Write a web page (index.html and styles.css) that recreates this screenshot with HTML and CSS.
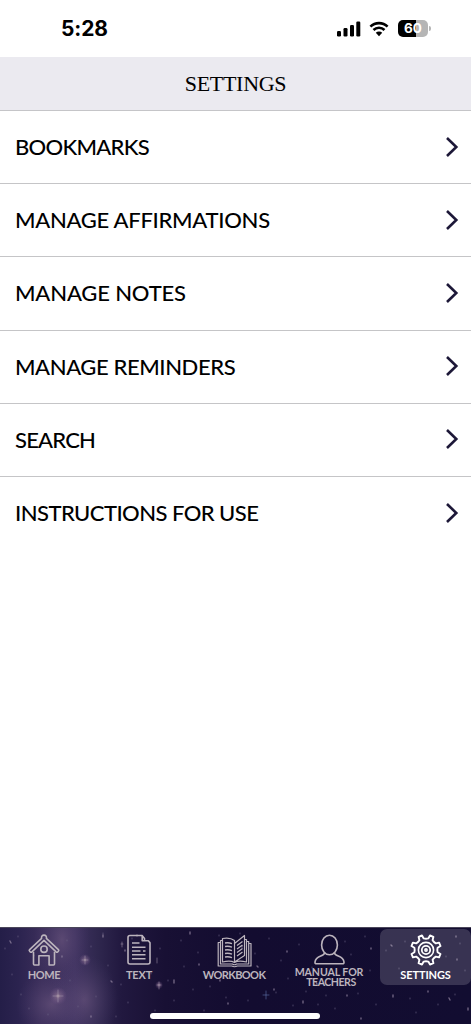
FILE: index.html
```
<!DOCTYPE html>
<html lang="en">
<head>
    <meta charset="UTF-8">
    <meta name="viewport" content="width=device-width, initial-scale=1">
    <title>Settings</title>
    <link rel="stylesheet" href="styles.css">
</head>
<body>
    <div class="status-bar">
        <span class="time">5:28</span>
        <div class="status-icons">
            <svg class="signal" width="24" height="16" viewBox="0 0 24 16">
                <rect x="0" y="10" width="4" height="5.5" rx="1.2"/>
                <rect x="6.5" y="7" width="4" height="8.5" rx="1.2"/>
                <rect x="13" y="4" width="4" height="11.5" rx="1.2"/>
                <rect x="19.3" y="0.5" width="4" height="15" rx="1.2"/>
            </svg>
            <svg class="wifi" width="20" height="16" viewBox="0 0 20 16">
                <path d="M1.4 5.6a12.3 12.3 0 0 1 17.2 0M4.5 9a7.8 7.8 0 0 1 11 0" fill="none" stroke="#000" stroke-width="2.6"/>
                <path d="M6.8 11.8a4.6 4.6 0 0 1 6.4 0L10 15.2z"/>
            </svg>
            <div class="battery"><span>60</span></div>
            <div class="battery-tip"></div>
        </div>
    </div>

    <header class="header">SETTINGS</header>

    <main class="menu">
        <a class="menu-item"><span class="bookmarks">BOOKMARKS</span><svg class="chevron" viewBox="0 0 14 22"><path d="M2 2l9.3 9L2 20"/></svg></a>
        <a class="menu-item"><span class="affirmations">MANAGE AFFIRMATIONS</span><svg class="chevron" viewBox="0 0 14 22"><path d="M2 2l9.3 9L2 20"/></svg></a>
        <a class="menu-item"><span class="notes">MANAGE NOTES</span><svg class="chevron" viewBox="0 0 14 22"><path d="M2 2l9.3 9L2 20"/></svg></a>
        <a class="menu-item"><span class="reminders">MANAGE REMINDERS</span><svg class="chevron" viewBox="0 0 14 22"><path d="M2 2l9.3 9L2 20"/></svg></a>
        <a class="menu-item"><span class="search">SEARCH</span><svg class="chevron" viewBox="0 0 14 22"><path d="M2 2l9.3 9L2 20"/></svg></a>
        <a class="menu-item"><span class="instructions">INSTRUCTIONS FOR USE</span><svg class="chevron" viewBox="0 0 14 22"><path d="M2 2l9.3 9L2 20"/></svg></a>
    </main>

    <footer class="footer">
        <!-- night sky -->
        <svg class="sky" width="471" height="97" viewBox="0 0 471 97">
            <defs>
                <radialGradient id="glow">
                    <stop offset="0" stop-color="#b9a1a6"/>
                    <stop offset="0.25" stop-color="#8b7190" stop-opacity="0.6"/>
                    <stop offset="1" stop-color="#75558a" stop-opacity="0"/>
                </radialGradient>
                <radialGradient id="nebula">
                    <stop offset="0" stop-color="#65517a" stop-opacity="0.75"/>
                    <stop offset="1" stop-color="#493b6a" stop-opacity="0"/>
                </radialGradient>
            </defs>
            <ellipse cx="62" cy="12" rx="28" ry="48" fill="url(#nebula)"/>
            <ellipse cx="84" cy="72" rx="34" ry="46" fill="url(#nebula)"/>
            <ellipse cx="52" cy="76" rx="36" ry="34" fill="url(#nebula)"/>
            <path class="dust" d="M5 20v1M12 46v1M18 8v1M21 66v1M29 80v1M34 27v1M48 86v1M67 12v1M70 52v1M78 78v1M91 18v1M96 68v1M103 5v1M108 37v1M116 88v1M121 56v1M128 74v1M132 10v1M151 45v1M155 82v1M160 20v1M168 52v1M174 72v1M181 12v1M184 38v1M193 61v1M198 24v1M204 82v1M210 58v1M219 7v1M226 69v1M240 5v1M248 72v1M255 25v1M263 48v1M269 10v1M276 64v1M281 32v1M288 50v1M293 77v1M299 16v1M306 63v1M312 39v1M318 76v1M326 67v1M335 80v1M345 13v1M351 26v1M358 65v1M365 8v1M370 42v1M376 76v1M386 22v1M399 40v1M405 13v1M410 70v1M416 84v1M438 76v1M446 28v1M455 66v1M460 15v1M465 42v1"/>
            <path class="stars" d="M10 13l1 2M62 28v1M91 88v1M103 7v2M111 53l1 1M125 22v1M137 7v1M174 52v3M190 4v2M199 36v1M220 52v1M228 75v1M242 18v1M257 38l1 1M274 61v1M287 23v1M303 73v2M316 54l1 2M347 67v1M356 43v1M361 90v1M371 20v1M391 17l1 1M393 67v2M428 63v1M449 70l1 2M456 8v1M457 31v1M468 80v2"/>
            <circle cx="58" cy="68" r="9" fill="url(#glow)"/>
            <circle cx="85" cy="32" r="6" fill="url(#glow)"/>
            <circle cx="159" cy="57" r="4" fill="url(#glow)"/>
            <path class="sparkle" d="M58 62v12M53 68h10M85 28v8M82 32h6M159 54v7M157 57h4M122 14v5M121 16h2M157 30v5"/>
            <path class="sparkle blue" d="M266 63v8M263 67h6"/>
        </svg>

        <nav class="tabs">
            <a class="tab home">
                <svg width="34" height="34" viewBox="0 0 34 34">
                    <path d="M2.6 16.6L14.6 5.3a2.5 2.5 0 1 1 4.8 0l12 11.3q.8.8 0 1.6l-.7.7q-.8.7-1.6 0L17 7.4 4.9 18.9q-.8.7-1.6 0l-.7-.7q-.8-.8 0-1.6z"/>
                    <path d="M6.5 18.8V31q0 1 1 1h4.4v-9.3h10.2V32h4.4q1 0 1-1V18.8"/>
                    <circle cx="17" cy="16.2" r="3.2"/>
                </svg>
                <span>HOME</span>
            </a>
            <a class="tab text">
                <svg width="34" height="34" viewBox="0 0 34 34">
                    <path d="M8 2.5h12.2v5.3h6.2l1.6 2V29q0 2-2 2H8q-2 0-2-2V4.500q0-2 2-2zM20.500 3l2 2.400v2M10 10h7.500M10 14.200h13.500M10 18h8.500M21 18h2.500M10 21.800h13.500M10 25.800h13.500"/>
                </svg>
                <span>TEXT</span>
            </a>
            <a class="tab workbook">
                <svg class="book" width="36" height="36" viewBox="0 0 36 36">
                    <path d="M18.500 8.500Q14 5 6.500 6.500V30q8-1.800 12 .5zM18.500 11.500l10-8v20l-10 6.500M18.500 30.500q4-2.300 12-.5V7.500h-2M6.500 8.500h-2V32h12q2 1.500 4 0h12.200V9.500h-2M4.500 10.500H2.200V34h13.500q2.800 1.500 5.600 0H35V11.500h-2.300"/>
                    <path d="M9 11q3.500-.7 7 .6M9 14.500q3.500-.7 7 .6M9 18q3.500-.7 7 .6M9 21.500q3.500-.7 7 .6M9 25q3.500-.7 7 .6M21 13.500l5.500-4M21 17l5.500-4M21 20.500l5.500-4M21 24l5.500-4" stroke-width="1.3"/>
                </svg>
                <span>WORKBOOK</span>
            </a>
            <a class="tab manual">
                <svg width="34" height="34" viewBox="0 0 34 34">
                    <ellipse cx="17.500" cy="12" rx="7.900" ry="9.800"/>
                    <path d="M12.600 19.700c-.3 4.200-8.800 2.600-9.600 9.300q-.2 1.800 1.600 1.800h25.800q1.800 0 1.600-1.800c-.8-6.700-9.300-5.100-9.600-9.300"/>
                </svg>
                <span class="line">MANUAL FOR</span>
                <span class="line teachers">TEACHERS</span>
            </a>
            <a class="tab active">
                <svg width="34" height="34" viewBox="-17 -17 34 34">
                    <path d="M11.600 2.300L14.500 4L13.100 7.400L9.800 6.600Q7.800 7.800 6.600 9.800L7.400 13.100L4 14.500L2.300 11.600Q0 11 -2.300 11.600L-4 14.500L-7.400 13.100L-6.600 9.800Q-7.800 7.800 -9.800 6.600L-13.100 7.400L-14.500 4L-11.600 2.300Q-11 0 -11.600 -2.300L-14.500 -4L-13.100 -7.400L-9.800 -6.600Q-7.800 -7.800 -6.600 -9.800L-7.400 -13.100L-4 -14.500L-2.300 -11.600Q0 -11 2.300 -11.600L4 -14.500L7.400 -13.100L6.600 -9.800Q7.800 -7.800 9.800 -6.600L13.100 -7.400L14.500 -4L11.600 -2.300Q11 0 11.600 2.300z" stroke-width="1.900"/>
                    <circle r="7.600"/>
                    <circle r="4.200" stroke-width="1.800"/>
                    <circle r="1.100"/>
                </svg>
                <span>SETTINGS</span>
            </a>
        </nav>
        <div class="home-indicator"></div>
    </footer>
</body>
</html>
```
FILE: styles.css
```
* {
    box-sizing: border-box;
}

body {
    margin: 0;
    height: 1024px;
    display: flex;
    flex-direction: column;
    background: #fff;
    color: #000;
    font-family: Lato, sans-serif;
    overflow: hidden;
}

.status-bar {
    height: 56.5px;
    flex: none;
    display: flex;
    justify-content: space-between;
    padding: 0 40px 0 61px;
}

.time {
    font: bold 21px/58px Inter, sans-serif;
    letter-spacing: -0.1px;
}

.status-icons {
    height: 57px;
    display: flex;
    align-items: center;
}

.wifi {
    margin: 0 9px 0 8px;
}

.battery {
    width: 30px;
    height: 17px;
    border-radius: 5px;
    background: linear-gradient(90deg, #000 60%, #b5b5b5 60%);
    color: #fff;
    font: bold 13.5px/17px Inter, sans-serif;
    text-align: center;
}

.battery-tip {
    width: 2px;
    height: 5px;
    margin-left: 1px;
    border-radius: 0 2px 2px 0;
    background: #b5b5b5;
}

.header {
    height: 54.5px;
    flex: none;
    background: #ebeaf0;
    border-bottom: 1px solid #c5c5c8;
    font: 22px/54px "Liberation Serif", serif;
    letter-spacing: -0.3px;
    text-align: center;
}

.menu {
    flex: 1;
}

.menu-item {
    height: 73.2px;
    display: flex;
    align-items: center;
    justify-content: space-between;
    padding: 0 12px 1px 15px;
    border-bottom: 1.3px solid #c5c5c7;
    font-size: 22px;
    font-weight: 500;
    white-space: nowrap;
}

.menu-item:last-child {
    border-bottom: none;
    padding-bottom: 2px;
}

.bookmarks {
    letter-spacing: -0.7px;
}

.affirmations {
    letter-spacing: -0.28px;
}

.notes {
    letter-spacing: -0.15px;
}

.reminders {
    letter-spacing: -0.4px;
}

.search {
    letter-spacing: -0.8px;
}

.instructions {
    letter-spacing: -0.55px;
}

.chevron {
    width: 14px;
    height: 22px;
    fill: none;
    stroke: #1d1838;
    stroke-width: 2.6;
}

.footer {
    height: 97px;
    flex: none;
    position: relative;
    border-top: 1px solid #4a465a;
    background: linear-gradient(90deg, #241e48 0, #2b234f 18px, #3b2e5a 42px, #3e315f 75px, #30284f 96px, #21183f 122px, #181034 165px, #130c30 240px, #120d31 100%);
}

.sky {
    position: absolute;
    top: 0;
    left: 0;
    fill: none;
    stroke-linecap: round;
}

.dust {
    stroke: #6c6285;
    stroke-width: 1;
    opacity: 0.65;
}

.stars {
    stroke: #9588a2;
    stroke-width: 1.4;
    opacity: 0.7;
}

.sparkle {
    stroke: #a395ac;
    stroke-width: 0.9;
    opacity: 0.6;
}

.blue {
    stroke: #6b7eb8;
}

.tabs {
    position: relative;
    display: flex;
    justify-content: space-between;
    padding-top: 1px;
}

.tab {
    width: 88px;
    height: 56px;
    display: flex;
    flex-direction: column;
    align-items: center;
    padding-top: 4px;
    color: #bcb4bd;
    font-size: 11px;
    font-weight: bold;
    line-height: 10px;
    text-align: center;
    white-space: nowrap;
}

.tab svg {
    flex: none;
    fill: none;
    stroke: currentColor;
    stroke-width: 1.6;
    stroke-linejoin: round;
}

.tab span {
    margin-top: 3px;
}

.home span {
    letter-spacing: -0.4px;
}

.text span {
    letter-spacing: -0.2px;
}

.tab .book {
    margin-top: -1px;
    margin-bottom: -1px;
    stroke-width: 1.2;
}

.workbook span {
    letter-spacing: -0.6px;
}

.manual .line {
    margin-top: 0;
    font-size: 10.6px;
    letter-spacing: -0.1px;
}

.manual .teachers {
    padding-left: 4px;
    letter-spacing: -0.5px;
}

.active {
    width: 91px;
    border-radius: 7px;
    background: rgba(255, 255, 255, 0.16);
    color: #fff;
}

.active span {
    letter-spacing: -0.1px;
}

.home-indicator {
    position: absolute;
    left: 150px;
    bottom: 5px;
    width: 170px;
    height: 6px;
    border-radius: 3px;
    background: #fff;
}
```
